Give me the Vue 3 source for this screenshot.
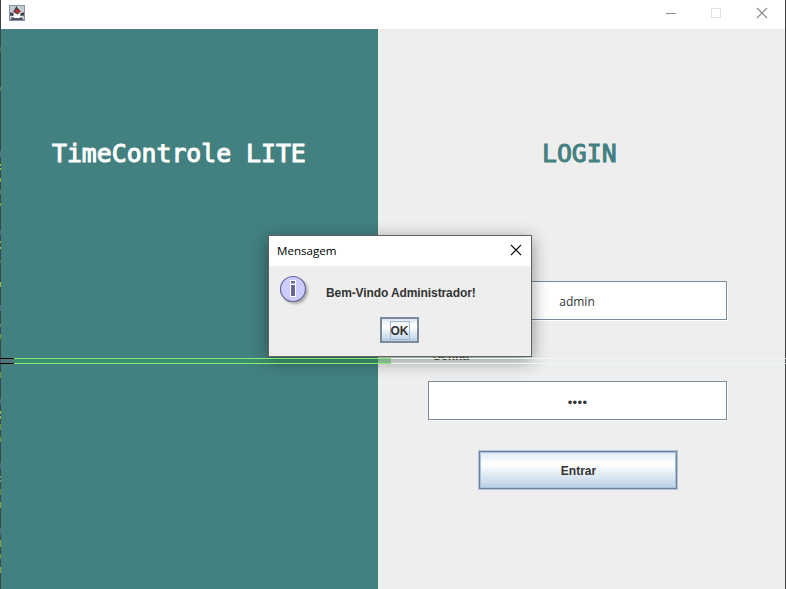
<script setup>
import { ref } from 'vue'

const user = ref('admin')
const password = ref('••••')
const message = ref('Bem-Vindo Administrador!')

// Slivers of the editor visible behind the window's left edge: [y, height, colour]
const slivers = [
  [47, 5, '#5b6a58'], [87, 4, '#6b7a50'], [151, 6, '#55708a'],
  [164, 2, '#a3b34a'], [168, 2, '#a3b34a'], [178, 4, '#8fa040'], [190, 4, '#6d7468'],
  [203, 3, '#8fa040'], [230, 5, '#506a80'], [241, 2, '#9a9a60'], [247, 2, '#a3b34a'],
  [260, 3, '#60704c'], [282, 5, '#a3b34a'], [305, 6, '#566c7a'], [324, 3, '#70805c'],
  [334, 5, '#7d9040'], [372, 6, '#7c8f42'], [399, 5, '#566c7a'], [411, 3, '#a3a94e'],
  [416, 3, '#a3a94e'], [424, 6, '#7c8f42'], [437, 5, '#7c8f42'], [463, 6, '#566c7a'],
  [476, 2, '#90907a'], [480, 2, '#90907a'], [489, 6, '#6c8040'], [502, 6, '#8fa040'],
  [528, 7, '#566c7a'], [540, 7, '#8fa040'], [554, 5, '#7c8f42'], [567, 6, '#8fa040']
]
</script>

<template>
  <main class="window">
    <svg class="edge" width="1" height="589" viewBox="0 0 1 589">
      <rect width="1" height="589" fill="#3b4646" />
      <rect v-for="s in slivers" :key="s[0]" width="1" :y="s[0]" :height="s[1]" :fill="s[2]" />
    </svg>

    <div class="frame">
      <header class="titlebar">
        <svg class="duke" width="16" height="16" viewBox="0 0 16 16">
          <rect x=".5" y=".5" width="15" height="15" fill="#c3cad6" stroke="#8b91a4" />
          <path d="M3 9l2-3 2-4 2-1 3 5 2 3-1 4H3z" fill="#f6f6f6" />
          <path d="M7.500 1l4.500 5.500-3.500 3-4.500-2.500z" fill="#4c4448" />
          <path d="M1 7.500l3.500 .5v3L1 10.500zM11.500 8l3.500-.5v3l-3.500 .5z" fill="#3c4047" />
          <path d="M1 15l2.500-3 3 1 2.500-.5 3-.5 3 3z" fill="#50545c" />
          <path d="M5 11h6v2H5z" fill="#fff" />
          <ellipse cx="8.500" cy="6.300" rx="2.200" ry="1.900" fill="#b9302f" />
        </svg>
        <svg width="104" height="16" viewBox="0 0 104 16" fill="none">
          <path d="M1 8.500h10" stroke="#8a8a8a" />
          <rect x="46.500" y="3.500" width="9" height="9" stroke="#e2e2e2" />
          <path d="M92 3l10 10M102 3L92 13" stroke="#858585" stroke-width="1.100" />
        </svg>
      </header>

      <div class="content">
        <section class="brand"><h1>TimeControle LITE</h1></section>
        <section class="login">
          <h2>LOGIN</h2>
          <form class="form" @submit.prevent>
            <div class="field user">{{ user }}</div>
            <label>Senha</label>
            <div class="field pass">{{ password }}</div>
            <button class="enter">Entrar</button>
          </form>
        </section>
      </div>
    </div>

    <div class="dialog">
      <div class="dialog-title">
        <span>Mensagem</span>
        <svg width="12" height="12" viewBox="0 0 12 12">
          <path d="M1 1l10 10M11 1L1 11" stroke="#111" stroke-width="1.100" />
        </svg>
      </div>
      <div class="dialog-body">
        <svg width="32" height="32" viewBox="0 0 32 32">
          <defs>
            <filter id="soft" x="-30%" y="-30%" width="160%" height="160%">
              <feGaussianBlur stdDeviation="1.300" />
            </filter>
          </defs>
          <circle cx="16" cy="16" r="13" fill="#999" opacity=".75" filter="url(#soft)" />
          <circle cx="14" cy="14" r="12.500" fill="#ccccff" stroke="#666699" stroke-width="1.200" />
          <path d="M11 5h6v4h-6zM11 9h6v13h-6z" fill="#fff" />
          <path d="M12 6h4v2.500h-4zM12 10h4v11h-4z" fill="#666699" />
        </svg>
        <p>{{ message }}</p>
      </div>
      <button class="ok"><span>OK</span></button>
    </div>

    <div class="ruler"><i class="dark"></i><i class="green"></i><i class="pale"></i></div>
  </main>
</template>

<style>
body { margin: 0; overflow: hidden; }
</style>

<style scoped>
* { box-sizing: border-box; }
.window {
  position: relative;
  width: 786px;
  height: 589px;
  display: flex;
  overflow: hidden;
  color: #333;
  font: 12px "Liberation Sans", sans-serif;
}
.edge { flex: none; }
.frame {
  flex: 1;
  display: flex;
  flex-direction: column;
  border-right: 1px solid #414141;
  background: #eee;
}
.titlebar {
  flex: none;
  height: 29px;
  display: flex;
  justify-content: space-between;
  padding: 5px 16px 0 8px;
  background: #fff;
}
.content { flex: 1; display: flex; }
.brand { width: 377px; background: #438080; color: #fff; }
h1, h2 {
  margin: 0;
  padding-top: 110px;
  font: 24.800px/30px "DejaVu Sans Mono", monospace;
  -webkit-text-stroke: 1px currentColor;
  white-space: pre;
}
h1 { padding-left: 51px; }
.login { flex: 1; }
h2 { padding-left: 164px; color: #438080; }
.form { display: flex; flex-direction: column; padding: 112px 0 0 50px; }
.field {
  width: 299px;
  height: 39px;
  display: flex;
  align-items: center;
  justify-content: center;
  padding-top: 2px;
  border: 1px solid #7a8a99;
  background: #fff;
  box-shadow: 1px 1px 0 #fff;
}
.user { padding-right: 1px; font: 12px "Open Sans", sans-serif; }
.pass { padding-top: 3px; font-size: 13px; letter-spacing: .35px; }
label { height: 61px; padding: 29px 0 0 5px; font-weight: bold; line-height: 14px; }
button {
  padding: 0;
  color: #333;
  font: bold 12px "Liberation Sans", sans-serif;
  background: linear-gradient(#dde8f3, #fff 30%, #fff 36%, #b8cfe5);
}
.enter {
  width: 198px;
  height: 38px;
  margin: 31px 0 0 51px;
  padding: 2px 0 0 1px;
  border: 1px solid #6f8398;
  box-shadow: inset 0 0 0 1px #a9c1d9, 0 0 0 1px #b0c6dc;
}
.dialog {
  position: absolute;
  left: 268px;
  top: 235px;
  width: 264px;
  height: 122px;
  display: flex;
  flex-direction: column;
  border: 1px solid #5f6363;
  background: #eee;
  box-shadow: 0 4px 16px rgba(0, 0, 0, .42);
}
.dialog-title {
  height: 30px;
  display: flex;
  align-items: center;
  justify-content: space-between;
  padding: 0 9px 2px 8px;
  background: #fff;
  color: #000;
  font: 11.600px "Open Sans", sans-serif;
}
.dialog-body { height: 51px; display: flex; padding: 9px 0 0 10px; }
.dialog-body p {
  margin: 11px 0 0 15px;
  font-weight: bold;
  line-height: 14px;
  letter-spacing: -.1px;
  white-space: nowrap;
}
.ok {
  width: 39px;
  height: 26px;
  margin-left: 111px;
  display: flex;
  align-items: center;
  justify-content: center;
  border: 2px solid #7a8a99;
}
.ok span { padding: 2px 0 1px; border: 1px solid #a3b8cc; line-height: 14px; }
.ruler {
  position: absolute;
  left: 0;
  top: 358px;
  width: 786px;
  height: 6px;
  display: flex;
}
.ruler i { border: solid; border-width: 1px 0; }
.ruler .dark { width: 14px; border-color: #000; background: rgba(100, 100, 120, .35); }
.ruler .green { width: 377px; border-color: #83ed7b; background: rgba(50, 160, 75, .4); }
.ruler .pale { flex: 1; border-color: #edfbed; background: rgba(210, 240, 215, .12); }
</style>
